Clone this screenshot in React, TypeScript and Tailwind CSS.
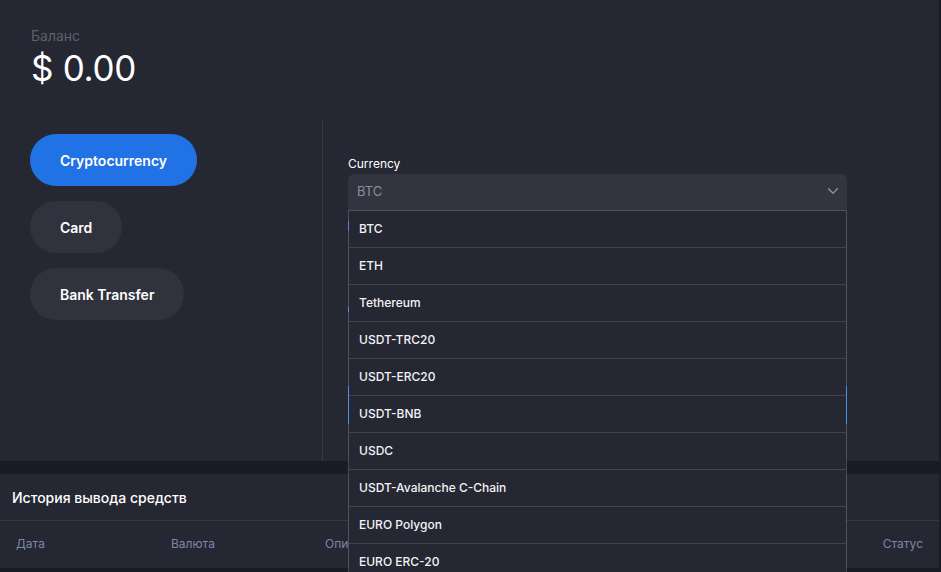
import { ChevronDown } from "lucide-react";

const currencies = [
  "BTC",
  "ETH",
  "Tethereum",
  "USDT-TRC20",
  "USDT-ERC20",
  "USDT-BNB",
  "USDC",
  "USDT-Avalanche C-Chain",
  "EURO Polygon",
  "EURO ERC-20",
  "EURO BEP-20",
];

const methods = [
  { label: "Cryptocurrency", active: true },
  { label: "Card", active: false },
  { label: "Bank Transfer", active: false },
];

export default function App() {
  return (
    <div
      className="h-[572px] w-[941px] overflow-hidden bg-[#1b1c23] text-white"
      style={{ fontFamily: "Inter, 'Noto Sans', sans-serif" }}
    >
      {/* Balance + deposit form */}
      <section className="mr-[2px] h-[461px] bg-[#252733]">
        <div className="pl-[31px] pt-[27px]">
          <div className="text-[14px] leading-[17px] text-[#5e616c]">Баланс</div>
          <div className="mt-[2px] text-[35px] leading-[44px] tracking-[-0.3px]">$ 0.00</div>
        </div>

        <div className="mt-[29px] flex h-[342px]">
          {/* Payment methods */}
          <div className="flex w-[323px] flex-col items-start gap-[15px] border-r border-[#363844] pl-[30px] pt-[15px]">
            {methods.map((m) => (
              <button
                key={m.label}
                className={
                  m.active
                    ? "h-[52px] rounded-full bg-[#2172e5] px-[30px] text-[14px] font-semibold text-white"
                    : "h-[52px] rounded-full bg-[#30323e] px-[30px] text-[14px] font-semibold text-white"
                }
              >
                {m.label}
              </button>
            ))}
          </div>

          {/* Currency form */}
          <div className="relative z-10 pl-[25px] pt-[37px]">
            <div className="text-[12px] leading-[15px] text-white">Currency</div>
            <div className="relative mt-[3px] w-[499px]">
              <div className="flex h-[36px] items-center justify-between rounded-t-[6px] bg-[#323440] pl-[9px] pr-[5px]">
                <span className="text-[13px] text-[#8a8e9b]">BTC</span>
                <ChevronDown size={18} strokeWidth={2} className="mb-[3px] text-[#8c8f99]" />
              </div>

              {/* Fields lying under the open list */}
              <div className="flex flex-col">
                <div className="mt-[11px] h-[10px] border-l border-[#4b52d8]" />
                <div className="mt-[76px] h-[5px] border-l border-[#2172e5]" />
                <div className="mt-[74px] h-[38px] border-x border-[#2172e5]" />
              </div>

              {/* Open option list */}
              <ul className="absolute left-0 top-[36px] w-[499px] border-x border-t border-white/20 bg-[#252733] bg-clip-padding">
                {currencies.map((c) => (
                  <li
                    key={c}
                    className="flex h-[37px] items-center border-b border-[#42434c] pl-[10px] text-[12px] font-medium text-[#f3f3f5]"
                  >
                    {c}
                  </li>
                ))}
              </ul>
            </div>
          </div>
        </div>
      </section>

      {/* Withdrawal history */}
      <section className="mr-[2px] mt-[13px] h-[94px] bg-[#252733]">
        <div className="flex h-[47px] items-center border-b border-[#363844] pl-[12px] text-[14px] font-medium text-white">
          История вывода средств
        </div>
        <div className="relative flex h-[46px] items-center text-[12px] text-[#7c86a6]">
          <span className="absolute left-[16px]">Дата</span>
          <span className="absolute left-[171px]">Валюта</span>
          <span className="absolute left-[325px]">Описание</span>
          <span className="absolute right-[16px]">Статус</span>
        </div>
      </section>
    </div>
  );
}
